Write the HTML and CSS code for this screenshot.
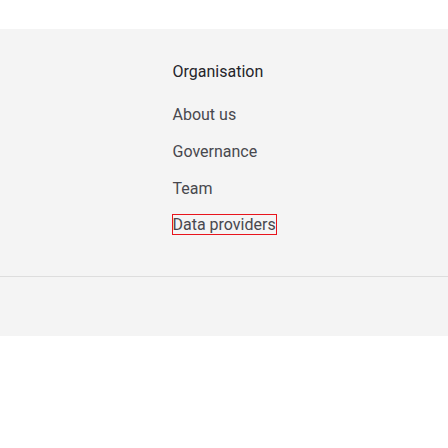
FILE: index.html
```html
<!DOCTYPE html>
<html lang="en">
<head>
<meta charset="utf-8">
<title>Footer</title>
<link rel="stylesheet" href="styles.css">
</head>
<body>
<div class="top"></div>
<footer class="footer">
  <div class="footer-main">
    <nav class="footer-col">
      <h2 class="footer-heading">Organisation</h2>
      <ul class="footer-links">
        <li><a href="#" class="footer-link">About us</a></li>
        <li><a href="#" class="footer-link">Governance</a></li>
        <li><a href="#" class="footer-link">Team</a></li>
        <li><a href="#" class="footer-link focused">Data providers</a></li>
      </ul>
    </nav>
  </div>
  <div class="footer-bottom"></div>
</footer>
</body>
</html>
```
FILE: styles.css
```css
html, body {
  margin: 0;
  padding: 0;
  background: #ffffff;
  font-family: Roboto, "Liberation Sans", sans-serif;
}
.top {
  height: 29px;
  background: #ffffff;
}
.footer {
  background: #f4f4f4;
}
.footer-main {
  padding: 32.5px 0 24.2px 172.5px;
  border-bottom: 1px solid #dddddd;
}
.footer-heading {
  margin: 0;
  font-size: 16px;
  line-height: 20px;
  font-weight: 400;
  color: #24242a;
}
.footer-links {
  list-style: none;
  margin: 23.7px 0 0;
  padding: 0;
}
.footer-links li {
  font-size: 16px;
  line-height: 20px;
  margin-bottom: 16.67px;
}
.footer-link {
  color: #48484e;
  text-decoration: none;
}
.footer-link.focused {
  outline: 1px solid #e8141c;
  outline-offset: 0;
}
.footer-bottom {
  height: 59px;
}
```
